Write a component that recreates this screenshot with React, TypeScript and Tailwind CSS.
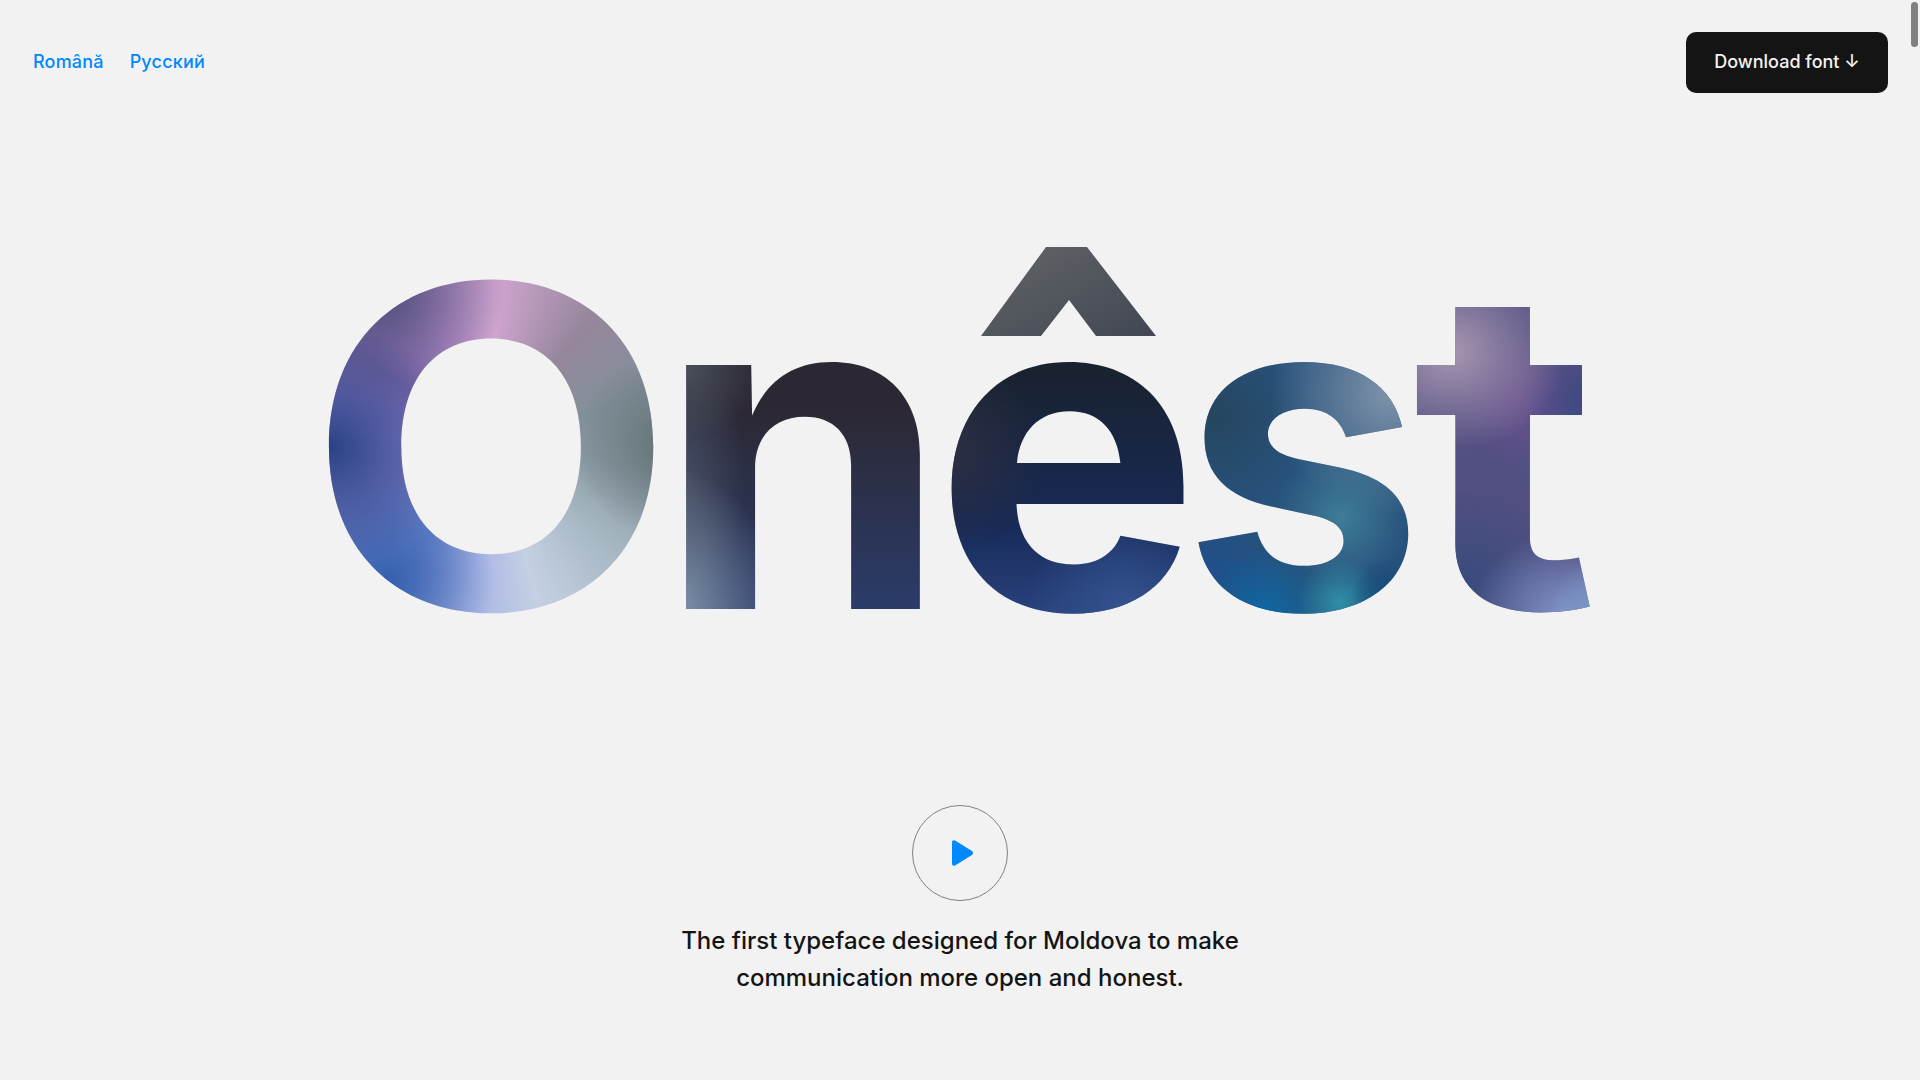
const letterBase = "block h-[430px] shrink-0 origin-left text-left text-transparent bg-clip-text";

const meshO =
  "bg-[radial-gradient(circle_120px_at_22px_215px,#2a4285,transparent),radial-gradient(circle_115px_at_70px_55px,#4c4a78,transparent),radial-gradient(circle_100px_at_75px_350px,#3560ad,transparent),radial-gradient(circle_95px_at_345px_215px,#5f6f72,transparent),conic-gradient(from_0deg_at_175px_213px,#cfa5cf_0deg,#95869c_35deg,#83919a_70deg,#8b9ba4_100deg,#a8b8c4_135deg,#c4d0e2_165deg,#a9b5e6_188deg,#6a84cc_215deg,#7a7cc4_250deg,#8a80cc_275deg,#7a68aa_305deg,#b68ec8_338deg,#cfa5cf_360deg)]";
const meshN =
  "bg-[radial-gradient(ellipse_110px_150px_at_10px_385px,#8a9cb0,transparent),radial-gradient(circle_75px_at_25px_135px,#4a505c,transparent),radial-gradient(ellipse_60px_130px_at_25px_250px,#464e64,transparent),linear-gradient(180deg,#2c2833_40%,#2b3c6a_88%)]";
// transparent above 27%: the font's own circumflex stays hidden under the logo's one
const meshE =
  "bg-[radial-gradient(circle_100px_at_10px_220px,#2e2f42,transparent),radial-gradient(circle_100px_at_190px_375px,#33528f,transparent),linear-gradient(180deg,transparent_27%,#19222f_27%,#19222f_32%,#182a57_68%,#2a4480_90%)]";
const meshS =
  "bg-[radial-gradient(circle_40px_at_215px_365px,#0f4e7a,transparent),radial-gradient(circle_45px_at_163px_370px,#2f90a8,transparent),radial-gradient(circle_70px_at_85px_385px,#0d68a5,transparent),radial-gradient(circle_70px_at_165px_285px,#3f7d98,transparent),radial-gradient(circle_85px_at_20px_350px,#1f4f8c,transparent),radial-gradient(circle_125px_at_215px_160px,#8094ab,transparent),radial-gradient(circle_95px_at_35px_185px,#26465f,transparent),linear-gradient(#28527c,#28527c)]";
const meshT =
  "bg-[radial-gradient(circle_100px_at_35px_120px,#a796b0,transparent),radial-gradient(circle_65px_at_159px_170px,#3a4880,transparent),radial-gradient(circle_70px_at_106px_170px,#6a5290,transparent),radial-gradient(circle_70px_at_159px_230px,#4a5a90,transparent),radial-gradient(circle_55px_at_176px_375px,#7fa2d2,transparent),radial-gradient(circle_80px_at_132px_380px,#7f90c4,transparent),radial-gradient(circle_85px_at_49px_345px,#3a4c7c,transparent),linear-gradient(#524f82,#524f82)]";

export default function App() {
  return (
    <main className="relative min-h-[1080px] bg-[#f2f2f2] font-['Inter',sans-serif] text-[#141414] overflow-hidden">
      <header className="flex items-center justify-between pt-8 pl-[33px] pr-8">
        <nav className="-mt-[2px] flex gap-[26px] text-[18px] font-medium tracking-[0.01em] text-[#0088ff]">
          <a href="#">Română</a>
          <a href="#">Русский</a>
        </nav>
        <a href="#" className="flex h-[61px] w-[202px] items-center justify-center rounded-[10px] bg-[#141414] pb-[2px] text-[18px] font-medium text-[#f2f2f2]">
          Download font ↓
        </a>
      </header>

      <div className="relative mt-[139px]">
        <h1 className="flex whitespace-nowrap pl-[307px] text-[447px] font-bold leading-[430px]">
          <span className={`${letterBase} w-[400px] scale-x-[1.069] ${meshO}`}>O</span>
          <span className={`${letterBase} -ml-[50px] w-[320px] scale-x-[1.05] ${meshN}`}>n</span>
          <span className={`${letterBase} -ml-[43px] w-[300px] ${meshE}`}>ê</span>
          <span className={`${letterBase} -ml-[52px] w-[260px] scale-x-[0.967] ${meshS}`}>s</span>
          <span className={`${letterBase} -ml-[30px] w-[220px] scale-x-[1.14] ${meshT}`}>t</span>
        </h1>
        {/* the logo's circumflex is bigger than the one in the font */}
        <div className="absolute left-[981px] top-[15px] h-[89px] w-[175px] bg-linear-to-br from-[#636567] to-[#414753] [clip-path:polygon(65px_0,106px_0,175px_89px,115px_89px,88px_53px,60px_89px,0_89px)]" />
      </div>

      <section className="mt-[143px] flex flex-col items-center">
        <button className="flex h-[96px] w-[96px] items-center justify-center rounded-full border-[1.5px] border-[#808080]">
          <svg width="24" height="28" viewBox="0 0 24 28" className="ml-1">
            <path d="M2 3.5 C2 1.5 3.5 .8 5 1.6 L22 12 C23.4 13 23.4 15 22 16 L5 26.4 C3.5 27.2 2 26.5 2 24.5 Z" fill="#0088ff" />
          </svg>
        </button>
        <p className="mt-[21px] text-center text-[24px] font-medium leading-[37px]">
          The first typeface designed for Moldova to make
          <br />
          communication more open and honest.
        </p>
      </section>

      <div className="absolute right-[2px] top-[2px] h-[45px] w-[7px] rounded-full bg-[#808080]" />
    </main>
  );
}
